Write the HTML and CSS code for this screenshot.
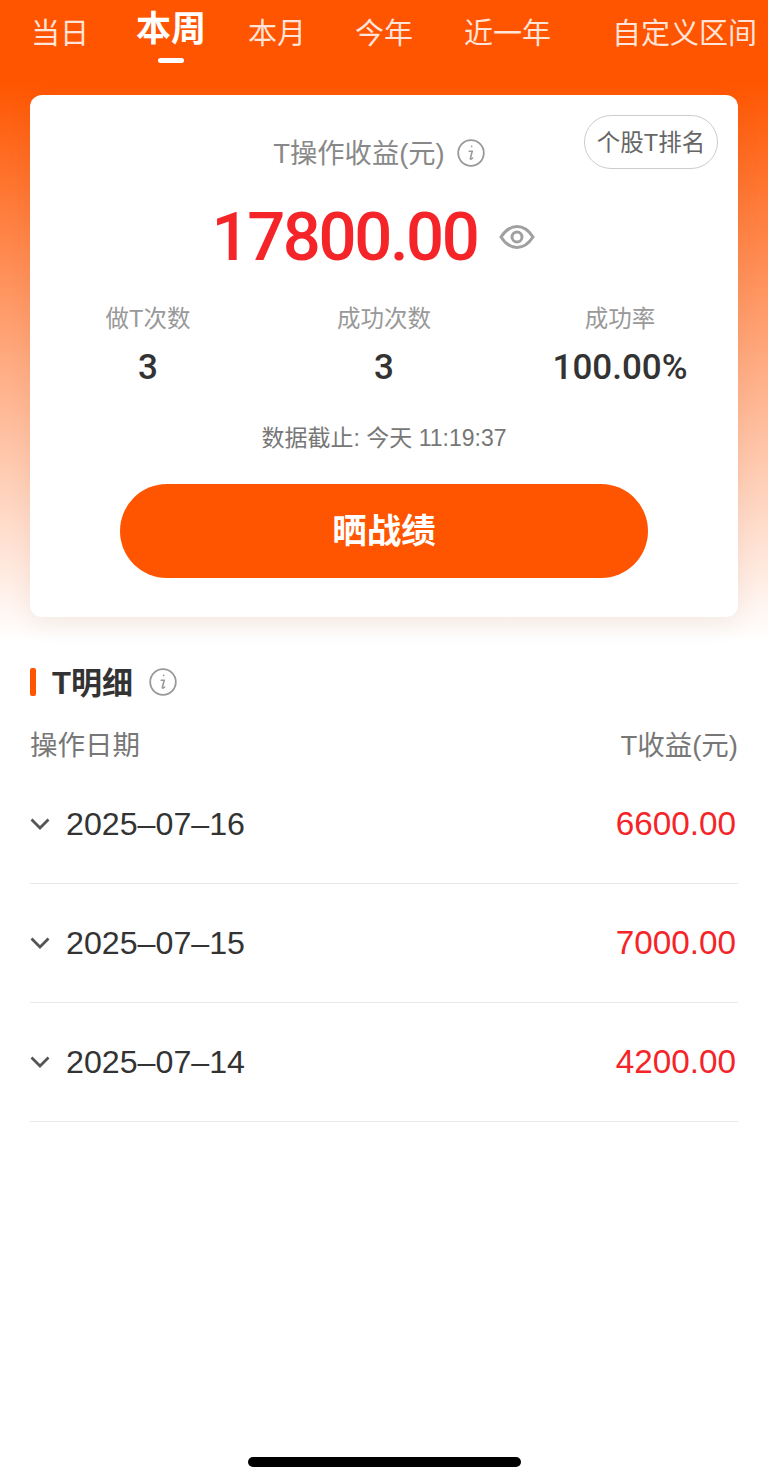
FILE: index.html
```html
<!DOCTYPE html>
<html lang="zh-CN">
<head>
    <meta charset="UTF-8">
    <title>T操作收益</title>
    <link rel="stylesheet" href="styles.css">
</head>
<body>
<div class="top">
    <ul class="tabs">
        <li class="tab">当日</li>
        <li class="tab active">本周</li>
        <li class="tab">本月</li>
        <li class="tab">今年</li>
        <li class="tab">近一年</li>
        <li class="tab">自定义区间</li>
    </ul>
    <div class="card">
        <a class="rank-btn" href="javascript:;">个股T排名</a>
        <div class="card-title">
            <span class="title-text">T操作收益(元)</span>
            <svg class="info" viewBox="0 0 28 28"><circle cx="14" cy="14" r="12.8"/><path class="info-i" d="M14.6 7.4h.1M12.2 12.2h3l-1.8 7.2c-.2.9.6 1.1 2.2-.4"/></svg>
        </div>
        <div class="total">
            <span class="total-num">17800.00</span>
            <svg class="eye" viewBox="0 0 36 26"><path d="M2 13C6.5 6 12 2.6 18 2.6S29.500 6 34 13c-4.500 7-10 10.400-16 10.400S6.500 20 2 13z"/><circle cx="18" cy="13" r="5"/></svg>
        </div>
        <div class="stats">
            <div class="stat">
                <div class="stat-label">做T次数</div>
                <div class="stat-value">3</div>
            </div>
            <div class="stat">
                <div class="stat-label">成功次数</div>
                <div class="stat-value">3</div>
            </div>
            <div class="stat">
                <div class="stat-label">成功率</div>
                <div class="stat-value">100.00%</div>
            </div>
        </div>
        <div class="deadline">数据截止: 今天 11:19:37</div>
        <a class="share-btn" href="javascript:;">晒战绩</a>
    </div>
</div>

<div class="detail">
    <div class="detail-title">
        <i class="bar"></i>
        <span class="title-text">T明细</span>
        <svg class="info" viewBox="0 0 28 28"><circle cx="14" cy="14" r="12.8"/><path class="info-i" d="M14.6 7.4h.1M12.2 12.2h3l-1.8 7.2c-.2.9.6 1.1 2.2-.4"/></svg>
    </div>
    <div class="detail-head">
        <span>操作日期</span>
        <span>T收益(元)</span>
    </div>
    <ul class="rows">
        <li class="row">
            <svg class="arrow" viewBox="0 0 20 14"><path d="M1.500 2.500L10 11l8.500-8.500"/></svg>
            <span class="row-date">2025–07–16</span>
            <span class="row-money">6600.00</span>
        </li>
        <li class="row">
            <svg class="arrow" viewBox="0 0 20 14"><path d="M1.500 2.500L10 11l8.500-8.500"/></svg>
            <span class="row-date">2025–07–15</span>
            <span class="row-money">7000.00</span>
        </li>
        <li class="row">
            <svg class="arrow" viewBox="0 0 20 14"><path d="M1.500 2.500L10 11l8.500-8.500"/></svg>
            <span class="row-date">2025–07–14</span>
            <span class="row-money">4200.00</span>
        </li>
    </ul>
</div>

<div class="home-bar"></div>
</body>
</html>
```

FILE: styles.css
```css
* {
    margin: 0;
    padding: 0;
    box-sizing: border-box;
}

ul, ol {
    list-style: none;
}

a {
    text-decoration: none;
}

body {
    width: 768px;
    height: 1483px;
    overflow: hidden;
    background-color: #fff;
    font-family: "Liberation Sans", "Noto Sans CJK SC", sans-serif;
}

.top {
    height: 640px;
    padding: 0 30px;
    background: linear-gradient(#ff5500 0, #ff5500 80px, #fff 640px);
}

.tabs {
    display: flex;
    align-items: flex-start;
    height: 95px;
    padding-left: 1px;
    color: rgba(255, 255, 255, 0.85);
    font-size: 29px;
    line-height: 34px;
    white-space: nowrap;
}

.tab {
    margin-top: 17px;
    margin-left: 49px;
}

.tab:first-child {
    margin-left: 0;
}

.tab:nth-child(5) {
    margin-left: 51px;
}

.tab:last-child {
    margin-left: 61px;
}

.tab.active {
    position: relative;
    margin-top: 12px;
    margin-left: 47px;
    margin-right: -7px;
    color: #fff;
    font-size: 35px;
    font-weight: bold;
}

.tab.active:after {
    content: "";
    position: absolute;
    left: 22px;
    top: 46px;
    width: 26px;
    height: 5px;
    border-radius: 3px;
    background-color: #fff;
}

.card {
    position: relative;
    height: 522px;
    padding-top: 40px;
    border-radius: 12px;
    background-color: #fff;
    box-shadow: 0 8px 24px rgba(120, 60, 30, 0.08);
}

.rank-btn {
    position: absolute;
    top: 20px;
    right: 20px;
    width: 134px;
    height: 54px;
    border: 1px solid #ccc;
    border-radius: 27px;
    color: #666;
    font-size: 23.500px;
    line-height: 54px;
    text-align: center;
    white-space: nowrap;
}

.card-title {
    display: flex;
    justify-content: center;
    align-items: center;
    height: 36px;
    margin-left: -10px;
    color: #888;
    font-size: 27.300px;
}

.title-text {
    padding-bottom: 4px;
}

.card-title .info {
    margin-left: 12px;
}

.info {
    width: 28px;
    height: 28px;
    fill: none;
    stroke: #999;
    stroke-width: 1.800;
}

.info-i {
    stroke-width: 1.600;
    stroke-linecap: round;
}

.total {
    display: flex;
    justify-content: center;
    align-items: center;
    height: 76px;
    margin-top: 28px;
    margin-left: -21px;
}

.total-num {
    color: #f52428;
    font-family: Roboto, "Liberation Sans", sans-serif;
    font-size: 67px;
    font-weight: 500;
    letter-spacing: -2.400px;
}

.eye {
    width: 36px;
    height: 26px;
    margin-left: 22px;
    fill: none;
    stroke: #a0a0a0;
    stroke-width: 3;
}

.stats {
    display: grid;
    grid-template-columns: repeat(3, 236px);
    margin-top: 29px;
    text-align: center;
}

.stat-label {
    color: #999;
    font-size: 23.500px;
    line-height: 30px;
}

.stat-value {
    margin-top: 14px;
    color: #333;
    font-family: Roboto, "Liberation Sans", sans-serif;
    font-size: 35px;
    font-weight: 500;
    line-height: 40px;
}

.deadline {
    margin-top: 35px;
    color: #777;
    font-size: 23px;
    line-height: 30px;
    text-align: center;
}

.share-btn {
    display: block;
    width: 528px;
    height: 94px;
    margin: 31px auto 0;
    border-radius: 47px;
    background-color: #ff5500;
    color: #fff;
    font-size: 34.500px;
    font-weight: bold;
    line-height: 94px;
    text-align: center;
}

.detail {
    padding: 23px 30px 0;
}

.detail-title {
    display: flex;
    align-items: center;
    height: 38px;
    color: #333;
    font-size: 31px;
    font-weight: bold;
}

.bar {
    width: 6px;
    height: 28px;
    margin-right: 16px;
    border-radius: 2px;
    background-color: #ff5500;
}

.detail-title .info {
    margin-left: 16px;
}

.detail-head {
    display: flex;
    justify-content: space-between;
    margin-top: 30px;
    color: #777;
    font-size: 27.500px;
    line-height: 30px;
}

.rows {
    margin-top: 4px;
}

.row {
    display: flex;
    align-items: center;
    height: 119px;
    padding-right: 2px;
    border-bottom: 1px solid #e8e8e8;
}

.arrow {
    flex: none;
    width: 20px;
    height: 14px;
    fill: none;
    stroke: #555;
    stroke-width: 2.800;
}

.row-date {
    margin-left: 16px;
    color: #333;
    font-size: 32.200px;
}

.row-money {
    margin-left: auto;
    color: #f52428;
    font-size: 33.300px;
}

.home-bar {
    position: absolute;
    left: 248px;
    top: 1457px;
    width: 273px;
    height: 10px;
    border-radius: 5px;
    background-color: #000;
}
```
